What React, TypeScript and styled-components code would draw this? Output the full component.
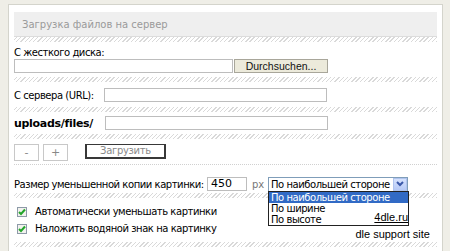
import React from "react";
import styled, { createGlobalStyle } from "styled-components";

const Global = createGlobalStyle`
  html, body { margin: 0; padding: 0; }
  body {
    background: #efeee7;
    font-family: "DejaVu Sans", Verdana, sans-serif;
    font-size: 10px;
    color: #000;
    width: 450px;
    height: 251px;
    overflow: hidden;
  }
`;

const Page = styled.div`
  padding: 4px 0 0 8px;
  position: relative;
  height: 247px;
`;

const Panel = styled.div`
  width: 435px;
  height: 247px;
  background: #fff;
  border: 1px solid #d4d4cc;
  border-bottom: none;
  padding: 7px 5px 0 5px;
  box-sizing: border-box;
  position: relative;
`;

const Header = styled.div`
  height: 24px;
  line-height: 25px;
  background: #efefef;
  border-bottom: 1px solid #dcdcdc;
  color: #9a9a9a;
  padding-left: 8px;
  font-size: 10px;
`;

const Hatch = styled.div<{ $mt?: number }>`
  height: 5px;
  margin-top: ${(p) => p.$mt ?? 0}px;
  background: repeating-linear-gradient(
    -45deg,
    #d9d9d9 0 1px,
    #ffffff 1px 3px
  );
`;

const Dotted = styled.div<{ $mt?: number }>`
  height: 0;
  border-top: 1px dotted #d0d0d0;
  margin-top: ${(p) => p.$mt ?? 0}px;
`;

const Label = styled.div<{ $mt?: number }>`
  height: 13px;
  line-height: 13px;
  margin-top: ${(p) => p.$mt ?? 0}px;
  letter-spacing: -0.45px;
`;

const Row = styled.div<{ $h: number; $mt?: number; $gap?: number }>`
  height: ${(p) => p.$h}px;
  margin-top: ${(p) => p.$mt ?? 0}px;
  display: flex;
  align-items: center;
  gap: ${(p) => p.$gap ?? 0}px;
`;

const Text = styled.span<{ $bold?: boolean; $w?: number }>`
  font-weight: ${(p) => (p.$bold ? "bold" : "normal")};
  font-size: ${(p) => (p.$bold ? "11px" : "10px")};
  letter-spacing: ${(p) => (p.$bold ? "-0.3px" : "-0.45px")};
  width: ${(p) => (p.$w ? `${p.$w}px` : "auto")};
  flex: none;
  white-space: nowrap;
`;

const Input = styled.div<{ $w: number }>`
  width: ${(p) => p.$w}px;
  height: 14px;
  box-sizing: border-box;
  border: 1px solid #bdbdbd;
  background: #fff;
  flex: none;
  font-size: 11px;
  line-height: 12px;
  padding-left: 3px;
`;

const BrowseButton = styled.div`
  width: 94px;
  height: 14px;
  box-sizing: border-box;
  border: 1px solid #a8a69a;
  background: #eceadb;
  font-family: "Liberation Sans", Arial, sans-serif;
  font-size: 10.5px;
  line-height: 12px;
  text-align: center;
  color: #111;
  margin-left: 1px;
  flex: none;
`;

const SmallButton = styled.div<{ $w: number }>`
  width: ${(p) => p.$w}px;
  height: 17px;
  box-sizing: border-box;
  border: 1px solid #c8c8c8;
  background: #fff;
  color: #888;
  text-align: center;
  line-height: 15px;
  font-size: 11px;
  flex: none;
`;

const SubmitButton = styled.div`
  width: 81px;
  height: 15px;
  box-sizing: border-box;
  border: 2px solid #383838;
  border-top-width: 1px;
  background: #fff;
  color: #8a8a8a;
  text-align: center;
  line-height: 12px;
  font-size: 10px;
  letter-spacing: -0.3px;
  margin-left: 13px;
  align-self: flex-start;
  flex: none;
`;

const Px = styled.span`
  color: #777;
  margin: 0 5px 0 5px;
  width: 11px;
  font-size: 10px;
  flex: none;
`;

const SelectBox = styled.div`
  width: 140px;
  height: 15px;
  box-sizing: border-box;
  border: 1px solid #7f9db9;
  background: #fff;
  display: flex;
  align-items: center;
  font-size: 10px;
  letter-spacing: -0.45px;
  position: relative;
  flex: none;
`;

const SelectText = styled.span`
  flex: 1;
  padding-left: 2px;
  white-space: nowrap;
`;

const Arrow = styled.div`
  width: 14px;
  height: 13px;
  flex: none;
  background: linear-gradient(#d6e2fc, #b6c9f6);
  border: 1px solid #b0c4ee;
  box-sizing: border-box;
  display: flex;
  align-items: center;
  justify-content: center;
`;

const DropList = styled.div`
  position: absolute;
  left: -1px;
  top: 13px;
  width: 141px;
  box-sizing: border-box;
  border: 1px solid #222;
  background: #fff;
  z-index: 5;
`;

const Option = styled.div<{ $sel?: boolean }>`
  height: 11px;
  line-height: 11px;
  padding-left: 2px;
  background: ${(p) => (p.$sel ? "#316ac5" : "#fff")};
  color: ${(p) => (p.$sel ? "#fff" : "#000")};
  white-space: nowrap;
`;

const CheckList = styled.div`
  margin-top: 5px;
`;

const CheckRow = styled.div`
  height: 17px;
  display: flex;
  align-items: center;
  padding-left: 3px;
  gap: 8px;
`;

const CheckBox = styled.div`
  width: 10px;
  height: 10px;
  box-sizing: border-box;
  border: 1px solid #8d9aa8;
  background: #f2f2ee;
  display: flex;
  align-items: center;
  justify-content: center;
  flex: none;
`;

const Watermark = styled.div`
  position: absolute;
  right: 20px;
  top: 209px;
  text-align: right;
  font-family: "Liberation Sans", Arial, sans-serif;
  font-size: 11px;
  line-height: 17px;
  color: #000;
  z-index: 6;
`;

const Link = styled.div`
  text-decoration: underline;
  padding-right: 22px;
`;

const Check = () => (
  <svg width="8" height="8" viewBox="0 0 8 8">
    <path d="M1 4 L3 6 L7 1.5" stroke="#22a52a" strokeWidth="2" fill="none" />
  </svg>
);

export default function App() {
  return (
    <>
      <Global />
      <Page>
        <Panel>
          <Header>Загрузка файлов на сервер</Header>
          <Hatch />
          <Label $mt={4}>С жесткого диска:</Label>
          <Row $h={14}>
            <Input $w={219} />
            <BrowseButton>Durchsuchen...</BrowseButton>
          </Row>
          <Hatch $mt={4} />
          <Row $h={20} $mt={3}>
            <Text $w={90}>С сервера (URL):</Text>
            <Input $w={223} />
          </Row>
          <Hatch $mt={2} />
          <Row $h={20} $mt={1}>
            <Text $bold $w={91}>uploads/files/</Text>
            <Input $w={223} />
          </Row>
          <Hatch $mt={1} />
          <Row $h={17} $mt={5} $gap={4}>
            <SmallButton $w={25}>-</SmallButton>
            <SmallButton $w={25}>+</SmallButton>
            <SubmitButton>Загрузить</SubmitButton>
          </Row>
          <Dotted $mt={3} />
          <Row $h={14} $mt={12}>
            <Text $w={193}>Размер уменьшенной копии картинки:</Text>
            <Input $w={40}>450</Input>
            <Px>px</Px>
            <SelectBox>
              <SelectText>По наибольшей стороне</SelectText>
              <Arrow>
                <svg width="8" height="6" viewBox="0 0 8 6">
                  <path d="M1 1 L4 4 L7 1" stroke="#3a58a8" strokeWidth="2" fill="none" />
                </svg>
              </Arrow>
              <DropList>
                <Option $sel>По наибольшей стороне</Option>
                <Option>По ширине</Option>
                <Option>По высоте</Option>
              </DropList>
            </SelectBox>
          </Row>
          <Hatch $mt={2} />
          <CheckList>
            <CheckRow>
              <CheckBox><Check /></CheckBox>
              <Text>Автоматически уменьшать картинки</Text>
            </CheckRow>
            <CheckRow>
              <CheckBox><Check /></CheckBox>
              <Text>Наложить водяной знак на картинку</Text>
            </CheckRow>
          </CheckList>
          <Hatch $mt={5} />
        </Panel>
        <Watermark>
          <Link>4dle.ru</Link>
          <div>dle support site</div>
        </Watermark>
      </Page>
    </>
  );
}
